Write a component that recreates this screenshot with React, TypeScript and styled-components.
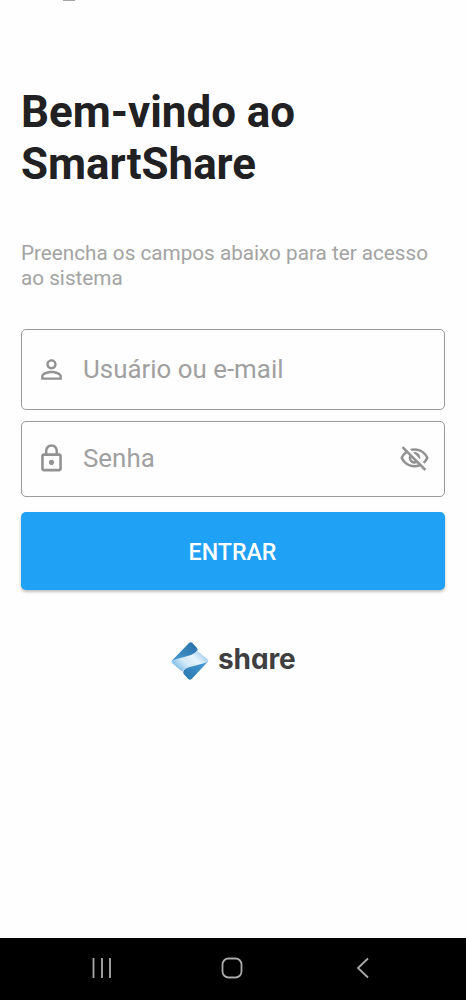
import React from 'react';
import styled, { createGlobalStyle } from 'styled-components';
import { MdPersonOutline, MdLockOutline, MdOutlineVisibilityOff } from 'react-icons/md';

const GlobalStyle = createGlobalStyle`
  * { box-sizing: border-box; }
  body { margin: 0; background: #fefefe; font-family: Roboto, sans-serif; }
`;

const Screen = styled.div`
  width: 466px;
  height: 1000px;
  display: flex;
  flex-direction: column;
  background: #fefefe;
  overflow: hidden;
`;

const StatusRemnant = styled.div`
  flex: none;
  width: 12px;
  height: 1px;
  margin-left: 63px;
  background: #a5a5a5;
`;

const Content = styled.main`
  flex: 1;
  display: flex;
  flex-direction: column;
  padding: 85px 21px 0;
`;

const Title = styled.h1`
  margin: 0;
  color: #212023;
  font-size: 43.9px;
  line-height: 52px;
  font-weight: 700;
  white-space: nowrap;
`;

const Intro = styled.p`
  margin: 51px 0 39px;
  color: #a3a3a3;
  font-size: 20.7px;
  line-height: 24.5px;
  white-space: nowrap;
`;

const Field = styled.label<{ $height: number; $iconLift?: number }>`
  height: ${(p) => p.$height}px;
  display: flex;
  align-items: center;
  padding: 0 14px;
  border: 1px solid #9a9a9a;
  border-radius: 5px;
  color: #929292;

  & + & { margin-top: 11px; }
  svg {
    flex: none;
    display: block;
    margin-bottom: ${(p) => p.$iconLift ?? 0}px;
  }
`;

const Input = styled.input`
  flex: 1;
  min-width: 0;
  margin: 0 0 2px 16px;
  padding: 0;
  border: 0;
  outline: 0;
  background: transparent;
  color: #333;
  font: 400 25.9px/32px Roboto, sans-serif;

  &::placeholder { color: #a0a0a0; opacity: 1; }
`;

const SubmitButton = styled.button`
  height: 78px;
  margin: 15px 0 0;
  padding: 2px 1px 0 0;
  border: 0;
  border-radius: 5px;
  background: #1fa1f5;
  box-shadow: 0 2px 3px rgba(0, 0, 0, 0.25);
  color: #fff;
  font: 500 23.2px/28px Roboto, sans-serif;
`;

const Brand = styled.div`
  display: flex;
  align-items: center;
  margin: 51px 0 0 150px;
`;

const BrandName = styled.span`
  margin: -4px 0 0 9px;
  color: #3f3e41;
  font: 700 28px/34px Inter, sans-serif;
  font-feature-settings: 'cv11';
  letter-spacing: -0.1px;
`;

const NavBar = styled.nav`
  flex: none;
  height: 62px;
  display: flex;
  align-items: center;
  justify-content: space-between;
  padding: 0 91px 2px 89px;
  background: #000;
`;

const BrandMark = () => (
  <svg width="38" height="40" viewBox="0 0 38 40">
    <defs>
      <linearGradient id="top" x1="0" y1="1" x2="1" y2="0">
        <stop offset="0" stopColor="#4c9dd2" />
        <stop offset="1" stopColor="#256ea6" />
      </linearGradient>
      <linearGradient id="band" x1="0" y1="0.8" x2="1" y2="0.2">
        <stop offset="0.08" stopColor="#7dbde6" />
        <stop offset="0.35" stopColor="#cfe8f7" />
        <stop offset="0.65" stopColor="#e6f3fb" />
        <stop offset="1" stopColor="#93c7ea" />
      </linearGradient>
      <linearGradient id="bottom" x1="0" y1="1" x2="1" y2="0">
        <stop offset="0" stopColor="#2874ad" />
        <stop offset="1" stopColor="#4c9fd6" />
      </linearGradient>
    </defs>
    <path d="M1 19.500 18 2q1.700-1.500 3.400 0l4.600 5q1.500 2-.5 4L22 15 3 21Z" fill="url(#top)" />
    <path d="m37 20.500-16.300 17.500q-1.700 1.500-3.400 0l-4.600-5q-1.500-2 .5-4L17 25l18-6Z" fill="url(#bottom)" />
    <path d="M.8 20.500Q2 19 5 18.200L20 14q3.500-1 6-4.500L37 18.500q1 1.300-.2 2Q35 21.800 32 22.500L18 26.300q-4 1.200-7 4.200L1 22q-.8-.8-.2-1.500Z" fill="url(#band)" />
  </svg>
);

const RecentsIcon = () => (
  <svg width="24" height="24" viewBox="0 0 24 24" fill="none" stroke="#aaa" strokeWidth="1.8">
    <path d="M4.500 2v20M13 2v20M21 2v20" />
  </svg>
);

const HomeIcon = () => (
  <svg width="24" height="24" viewBox="0 0 24 24" fill="none" stroke="#aaa" strokeWidth="1.8">
    <rect x="2.500" y="2.500" width="19" height="19" rx="6" />
  </svg>
);

const BackIcon = () => (
  <svg width="24" height="24" viewBox="0 0 24 24" fill="none" stroke="#aaa" strokeWidth="1.8">
    <path d="M17 2.500 7 12l10 9.500" />
  </svg>
);

export default function App() {
  return (
    <>
      <GlobalStyle />
      <Screen>
        <StatusRemnant />
        <Content>
          <Title>Bem-vindo ao<br />SmartShare</Title>
          <Intro>Preencha os campos abaixo para ter acesso<br />ao sistema</Intro>
          <Field $height={81}>
            <MdPersonOutline size={31} />
            <Input placeholder="Usuário ou e-mail" />
          </Field>
          <Field $height={76} $iconLift={2}>
            <MdLockOutline size={31} />
            <Input type="password" placeholder="Senha" />
            <MdOutlineVisibilityOff size={31} />
          </Field>
          <SubmitButton>ENTRAR</SubmitButton>
          <Brand>
            <BrandMark />
            <BrandName>share</BrandName>
          </Brand>
        </Content>
        <NavBar>
          <RecentsIcon />
          <HomeIcon />
          <BackIcon />
        </NavBar>
      </Screen>
    </>
  );
}
